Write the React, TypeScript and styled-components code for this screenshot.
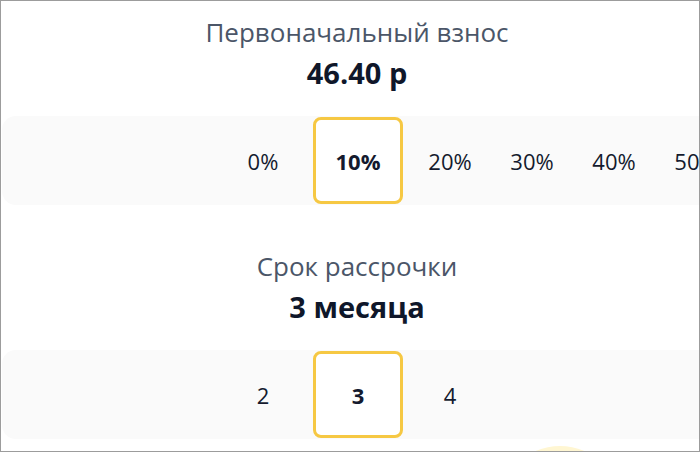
import React, { useState } from 'react';
import styled, { createGlobalStyle } from 'styled-components';

const GlobalStyle = createGlobalStyle`
  html, body {
    margin: 0;
    padding: 0;
    background: #ffffff;
  }
  body {
    font-family: 'Open Sans', 'Noto Sans', sans-serif;
  }
`;

const Frame = styled.div({
  boxSizing: 'border-box',
  width: '700px',
  height: '452px',
  border: '1px solid #9c9c9c',
  overflow: 'hidden',
  background: '#ffffff',
});

const Content = styled.div({
  width: '710px',
  marginLeft: '1px',
  paddingTop: '13px',
  display: 'flex',
  flexDirection: 'column',
});

const Section = styled.section<{ $gap?: number }>(({ $gap = 0 }) => ({
  display: 'flex',
  flexDirection: 'column',
  alignItems: 'stretch',
  marginTop: `${$gap}px`,
}));

const Title = styled.div({
  textAlign: 'center',
  fontSize: '26px',
  lineHeight: '36px',
  color: '#4b5668',
});

const Value = styled.div({
  textAlign: 'center',
  fontSize: '29px',
  lineHeight: '36px',
  fontWeight: 700,
  color: '#0f172a',
  marginTop: '5px',
});

const Band = styled.div({
  marginTop: '25px',
  height: '89px',
  background: '#fafafa',
  borderRadius: '14px 0 0 14px',
  display: 'flex',
  alignItems: 'center',
  paddingLeft: '220px',
});

const Option = styled.button<{ $active?: boolean }>(({ $active }) => ({
  boxSizing: 'border-box',
  flex: 'none',
  width: $active ? '90px' : '82px',
  height: '87px',
  margin: $active ? '0 6px 0 9px' : 0,
  padding: 0,
  border: $active ? '3px solid #f6c843' : '3px solid transparent',
  borderRadius: '8px',
  background: $active ? '#ffffff' : 'transparent',
  fontFamily: "'Open Sans', 'Noto Sans', sans-serif",
  fontSize: '22px',
  fontWeight: $active ? 700 : 400,
  color: '#141a2e',
  cursor: 'pointer',
  display: 'flex',
  alignItems: 'center',
  justifyContent: 'center',
}));

const Below = styled.div({
  display: 'flex',
  paddingLeft: '496px',
  marginTop: '7px',
});

const Blob = styled.div({
  width: '124px',
  height: '124px',
  borderRadius: '50%',
  background: '#fff6d2',
});

const downPayments = ['0%', '10%', '20%', '30%', '40%', '50%'];
const terms = ['2', '3', '4'];

export default function App() {
  const [down, setDown] = useState('10%');
  const [term, setTerm] = useState('3');

  return (
    <>
      <GlobalStyle />
      <Frame>
        <Content>
          <Section>
            <Title>Первоначальный взнос</Title>
            <Value>46.40 р</Value>
            <Band>
              {downPayments.map((d) => (
                <Option key={d} $active={d === down} onClick={() => setDown(d)}>
                  {d}
                </Option>
              ))}
            </Band>
          </Section>
          <Section $gap={43}>
            <Title>Срок рассрочки</Title>
            <Value>3 месяца</Value>
            <Band>
              {terms.map((t) => (
                <Option key={t} $active={t === term} onClick={() => setTerm(t)}>
                  {t}
                </Option>
              ))}
            </Band>
          </Section>
          <Below>
            <Blob />
          </Below>
        </Content>
      </Frame>
    </>
  );
}
